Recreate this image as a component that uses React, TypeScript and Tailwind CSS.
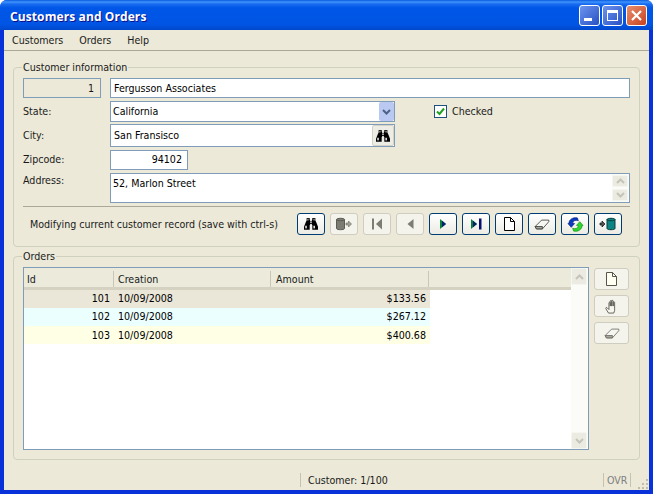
import React from "react";

const Binoculars = () => (
  <svg width="16" height="14" viewBox="0 0 18 16">
    <path d="M4 1h3.500v2H8v2h2V3h.5V1H14v3l1 2 2 5v3.500h-6.500V9H10V8H8v1h-.5v5.500H1V11l2-5 1-2z" fill="#000" />
    <rect x="2.500" y="10" width="1.600" height="3" fill="#fff" />
    <rect x="11.800" y="10" width="1.600" height="3" fill="#fff" />
    <rect x="5" y="2" width="1" height="2" fill="#fff" />
    <rect x="12" y="2" width="1" height="2" fill="#fff" />
    <rect x="8" y="6" width="2" height="1" fill="#fff" />
  </svg>
);

const Cyl = ({ fill, x, stroke }: { fill: string; x: number; stroke: string }) => (
  <g>
    <path d={`M${x} 3.500c0-1.600 8-1.600 8 0v9c0 1.600-8 1.600-8 0z`} fill={fill} stroke={stroke} />
    <path d={`M${x} 3.500c0 1.600 8 1.600 8 0`} fill="none" stroke={stroke} />
  </g>
);

const DbOut = () => (
  <svg width="18" height="16" viewBox="0 0 18 16">
    <Cyl fill="#7c7c72" x={1.500} stroke="#5c5c54" />
    <path d="M11 7h2.500V5l3 3-3 3V9H11z" fill="#a4a498" stroke="#77776c" strokeWidth=".7" />
  </svg>
);

const DbIn = () => (
  <svg width="18" height="16" viewBox="0 0 18 16">
    <path d="M1 7h2V5l3 3-3 3V9H1z" fill="#555" stroke="#111" strokeWidth=".7" />
    <Cyl fill="#0d8383" x={8} stroke="#063c3c" />
  </svg>
);

const First = () => (
  <svg width="11" height="12" viewBox="0 0 11 12">
    <rect x="0" y="0.500" width="2" height="11" fill="#7d7d73" />
    <path d="M10 .5v11L4 6z" fill="#7d7d73" />
  </svg>
);
const Prev = () => (
  <svg width="7" height="12" viewBox="0 0 7 12">
    <path d="M6.500 1v10L.5 6z" fill="#7d7d73" />
  </svg>
);
const Next = () => (
  <svg width="8" height="12" viewBox="0 0 8 12">
    <path d="M1 1v10l6-5z" fill="#0a7f3a" />
    <path d="M3 2.700v6.600L7 6z" fill="#06206e" />
  </svg>
);
const Last = () => (
  <svg width="11" height="12" viewBox="0 0 11 12">
    <path d="M0 1v10l6-5z" fill="#0a7f3a" />
    <path d="M2 2.700v6.600L6 6z" fill="#06206e" />
    <rect x="8" y=".5" width="2.500" height="11" fill="#06106e" />
  </svg>
);
const Doc = ({ c = "#000", f = "#fff" }: { c?: string; f?: string }) => (
  <svg width="11" height="14" viewBox="0 0 11 14">
    <path d="M.5.500h6l4 4v9H.5z" fill={f} stroke={c} />
    <path d="M6.500.500v4h4" fill="none" stroke={c} />
  </svg>
);
const Eraser = ({ c = "#333" }: { c?: string }) => (
  <svg width="16" height="13" viewBox="0 0 20 14">
    <path d="M1.500 9.500 9.500 1.500h9v2l-8 9H3z" fill="#f6f6f0" stroke={c} />
    <path d="M1.500 9.500h9v3H3z" fill="#a8a89c" stroke={c} />
  </svg>
);
const Refresh = () => (
  <svg width="17" height="17" viewBox="0 0 18 18">
    <path d="M2 8c0-4 4-7 9-6l1 3c-3-1-6 0-6 3h2l-3.500 4L1 8z" fill="#0a3bc4" stroke="#041a78" strokeWidth=".7" />
    <path d="M16 10c0 4-4 7-9 6l-1-3c3 1 6 0 6-3h-2l3.500-4L17 10z" fill="#2fd62f" stroke="#0e8f0e" strokeWidth=".7" />
  </svg>
);
const Hand = () => (
  <svg width="14" height="15" viewBox="0 0 16 17">
    <path d="M4 16 1 11c-.6-1 .6-2 1.500-1L4.500 12V4.500c0-1.300 1.500-1.300 1.500 0V8V2.500c0-1.300 1.700-1.300 1.700 0V8V2.500c0-1.300 1.700-1.300 1.700 0V8V4c0-1.300 1.600-1.300 1.600 0v9l-1 3z" fill="#f7f6ef" stroke="#55554c" />
  </svg>
);
const Chev = ({ up, c }: { up?: boolean; c: string }) => (
  <svg width="9" height="6" viewBox="0 0 9 6">
    <path d={up ? "M1 5l3.500-3.500L8 5" : "M1 1l3.500 3.500L8 1"} fill="none" stroke={c} strokeWidth="2" />
  </svg>
);

const ToolBtn = ({ on, children }: { on?: boolean; children: React.ReactNode }) => (
  <div
    className={
      on
        ? "w-[28px] h-[22px] flex items-center justify-center rounded-[3px] border border-[#003c74] bg-gradient-to-b from-white to-[#ecebe4]"
        : "w-[28px] h-[22px] flex items-center justify-center rounded-[3px] border border-[#cfcdc0] bg-[#f4f3ec]"
    }
  >
    {children}
  </div>
);

const SideBtn = ({ children }: { children: React.ReactNode }) => (
  <div className="w-[35px] h-[22px] flex items-center justify-center rounded-[3px] border border-[#cfcdc0] bg-[#f4f3ec]">
    {children}
  </div>
);

const ScrollBtn = ({ up, className }: { up?: boolean; className: string }) => (
  <div className={"w-[16px] flex items-center justify-center rounded-[2px] bg-[#ecebe2] border border-[#f6f6f0] " + className}>
    <Chev up={up} c="#c4c4b8" />
  </div>
);

const Field = "h-[20px] border border-[#7f9db9] bg-white flex items-center text-black";
const Row = ({ label, className, labelClass, children }: { label: string; className: string; labelClass?: string; children: React.ReactNode }) => (
  <div className={"flex " + className}>
    <div className={"w-[87px] shrink-0 " + (labelClass ?? "")}>{label}</div>
    {children}
  </div>
);

const WinBtn = ({ className, children }: { className: string; children: React.ReactNode }) => (
  <div className={"w-[21px] h-[21px] rounded-[3px] border border-white flex items-center justify-center " + className}>
    {children}
  </div>
);

const rows = [
  ["101", "10/09/2008", "$133.56", "bg-[#ebe7d8]", "pb-[2px]"],
  ["102", "10/09/2008", "$267.12", "bg-[#ebffff]", "pb-[2px]"],
  ["103", "10/09/2008", "$400.68", "bg-[#ffffe6]", ""],
];

export default function App() {
  return (
    <div className="w-[653px] h-[494px] flex flex-col rounded-t-[7px] overflow-hidden bg-[#0831d9] text-[10.6px] leading-[14px] text-[#1a1a1a] font-['DejaVu_Sans_Condensed','Liberation_Sans',sans-serif]">
      <div className="h-[30px] shrink-0 flex items-center pl-[10px] pr-[6px] bg-[linear-gradient(180deg,#0a5ae0_0px,#3f94fb_2px,#1a6cf0_4px,#0056e6_8px,#0055e5_24px,#0048cc_30px)]">
        <div className="flex-1 pt-[3px] text-white font-bold text-[12px] tracking-[0.1px] [text-shadow:1px_1px_#0f1089] font-['Open_Sans',sans-serif]">
          Customers and Orders
        </div>
        <div className="flex gap-[2px]">
          <WinBtn className="bg-gradient-to-br from-[#6f94ee] to-[#2750c4]">
            <div className="w-[8px] h-[3px] bg-white mt-[8px] mr-[4px]" />
          </WinBtn>
          <WinBtn className="bg-gradient-to-br from-[#6f94ee] to-[#2750c4]">
            <div className="w-[11px] h-[11px] border border-white border-t-[3px]" />
          </WinBtn>
          <WinBtn className="bg-gradient-to-br from-[#e88e6c] to-[#c8401c] ml-[1px]">
            <svg width="13" height="13" viewBox="0 0 13 13">
              <path d="M2 2l9 9M11 2l-9 9" stroke="#fff" strokeWidth="2.200" />
            </svg>
          </WinBtn>
        </div>
      </div>

      <div className="flex-1 mx-[4px] bg-[#ece9d8] flex flex-col min-h-0">
        <div className="h-[20px] shrink-0 flex items-center pl-[8px] gap-[16px]">
          <span>Customers</span>
          <span>Orders</span>
          <span>Help</span>
        </div>
        <div className="h-[1px] shrink-0 bg-[#aca899] mb-[9px]" />

        <div className="px-[9px] flex flex-col gap-[2px]">
          <fieldset className="border border-[#d0d0bf] rounded-[4px] px-[9px] pb-[10px] h-[187px]">
            <legend className="-ml-[1px] px-[1px] h-[14px]">Customer information</legend>
            <div className="pt-[4px] flex flex-col">
              <div className="flex">
                <div className="w-[78px] h-[20px] mr-[9px] border border-[#7f9db9] flex items-center justify-end pr-[6px]">1</div>
                <div className={Field + " flex-1 pl-[3px]"}>Fergusson Associates</div>
              </div>

              <Row label="State:" labelClass="pb-[2px]" className="mt-[3px] items-center h-[21px]">
                <div className="w-[285px] h-[21px] border border-[#7f9db9] bg-white flex items-center pl-[2px] pr-0 text-black">
                  <span className="flex-1 pb-[2px]">California</span>
                  <div className="w-[15px] h-[19px] rounded-[2px] bg-[#b9c9f2] flex items-center justify-center">
                    <Chev c="#4d6185" />
                  </div>
                </div>
                <div className="ml-[39px] w-[13px] h-[13px] border border-[#1c5180] bg-white flex items-center justify-center">
                  <svg width="9" height="9" viewBox="0 0 9 9">
                    <path d="M1 4.500l2.500 2.500L8 1.500" fill="none" stroke="#21a121" strokeWidth="2" />
                  </svg>
                </div>
                <span className="ml-[5px] pb-[2px]">Checked</span>
              </Row>

              <Row label="City:" labelClass="pb-[2px]" className="mt-[2px] items-center h-[23px]">
                <div className="w-[285px] h-[23px] border border-[#7f9db9] bg-white flex items-center pl-[3px] text-black">
                  <span className="flex-1 pb-[2px]">San Fransisco</span>
                  <div className="w-[22px] h-[21px] bg-[#eeede5] border border-[#d5d3c6] rounded-[2px] flex items-center justify-center">
                    <Binoculars />
                  </div>
                </div>
              </Row>

              <Row label="Zipcode:" labelClass="pb-[2px]" className="mt-[3px] items-center h-[20px]">
                <div className={Field + " w-[78px] justify-end pr-[5px] pb-[2px]"}>94102</div>
              </Row>

              <Row label="Address:" className="mt-[3px] h-[30px]">
                <div className="flex-1 h-[30px] border border-[#7f9db9] bg-white flex pl-[2px] text-black">
                  <span className="flex-1 pt-[2px]">52, Marlon Street</span>
                  <div className="w-[17px] bg-[#fbfbf8] flex flex-col justify-between py-[1px]">
                    <ScrollBtn up className="h-[12px]" />
                    <ScrollBtn className="h-[12px]" />
                  </div>
                </div>
              </Row>

              <div className="h-[1px] bg-[#aca899] mt-[3px] mb-[6px]" />

              <div className="flex items-center h-[22px]">
                <div className="pl-[7px] w-[274px] shrink-0 whitespace-nowrap">Modifying current customer record (save with ctrl-s)</div>
                <div className="flex gap-[5px]">
                  <ToolBtn on><Binoculars /></ToolBtn>
                  <ToolBtn><DbOut /></ToolBtn>
                  <ToolBtn><First /></ToolBtn>
                  <ToolBtn><Prev /></ToolBtn>
                  <ToolBtn on><Next /></ToolBtn>
                  <ToolBtn on><Last /></ToolBtn>
                  <ToolBtn on><Doc /></ToolBtn>
                  <ToolBtn on><Eraser /></ToolBtn>
                  <ToolBtn on><Refresh /></ToolBtn>
                  <ToolBtn on><DbIn /></ToolBtn>
                </div>
              </div>
            </div>
          </fieldset>

          <fieldset className="border border-[#d0d0bf] rounded-[4px] px-[9px] h-[211px]">
            <legend className="-ml-[1px] px-[1px] h-[14px]">Orders</legend>
            <div className="pt-[4px] flex gap-[5px]">
              <div className="w-[566px] h-[183px] border border-[#7f9db9] bg-white flex">
                <div className="flex-1 flex flex-col">
                  <div className="h-[22px] flex pt-[3px] border-b-[3px] border-[#d6d2c2] bg-[#ebeadb]">
                    <div className="w-[90px] pl-[3px] border-r border-[#cbc7b8] flex items-center">Id</div>
                    <div className="w-[157px] pl-[4px] border-r border-[#cbc7b8] flex items-center">Creation</div>
                    <div className="w-[158px] pl-[5px] border-r border-[#cbc7b8] flex items-center">Amount</div>
                  </div>
                  {rows.map((r) => (
                    <div key={r[0]} className={"w-[406px] h-[18px] flex items-center text-black " + r[4] + " " + r[3]}>
                      <div className="w-[86px] text-right">{r[0]}</div>
                      <div className="w-[80px] pl-[8px]">{r[1]}</div>
                      <div className="flex-1 text-right pr-[4px]">{r[2]}</div>
                    </div>
                  ))}
                </div>
                <div className="w-[17px] bg-[#fbfbf8] flex flex-col justify-between">
                  <ScrollBtn up className="h-[17px]" />
                  <ScrollBtn className="h-[17px]" />
                </div>
              </div>
              <div className="flex flex-col gap-[5px] pt-[1px]">
                <SideBtn><Doc c="#55554c" f="#fffff2" /></SideBtn>
                <SideBtn><Hand /></SideBtn>
                <SideBtn><Eraser c="#66665c" /></SideBtn>
              </div>
            </div>
          </fieldset>
        </div>

        <div className="mt-auto h-[20px] flex items-center relative">
          <div className="ml-[296px] h-[14px] border-l border-[#c5c2b2] pl-[7px]">Customer: 1/100</div>
          <div className="ml-auto mr-[18px] w-[28px] h-[14px] border-x border-[#c5c2b2] pl-[3px] text-[#808080] leading-[14px]">OVR</div>
          <svg className="absolute right-0 bottom-0" width="13" height="13" viewBox="0 0 13 13" fill="#c0bcac">
            <rect x="10" y="2" width="2" height="2" />
            <rect x="6" y="6" width="2" height="2" />
            <rect x="10" y="6" width="2" height="2" />
            <rect x="2" y="10" width="2" height="2" />
            <rect x="6" y="10" width="2" height="2" />
            <rect x="10" y="10" width="2" height="2" />
          </svg>
        </div>
      </div>
      <div className="h-[4px] shrink-0" />
    </div>
  );
}
